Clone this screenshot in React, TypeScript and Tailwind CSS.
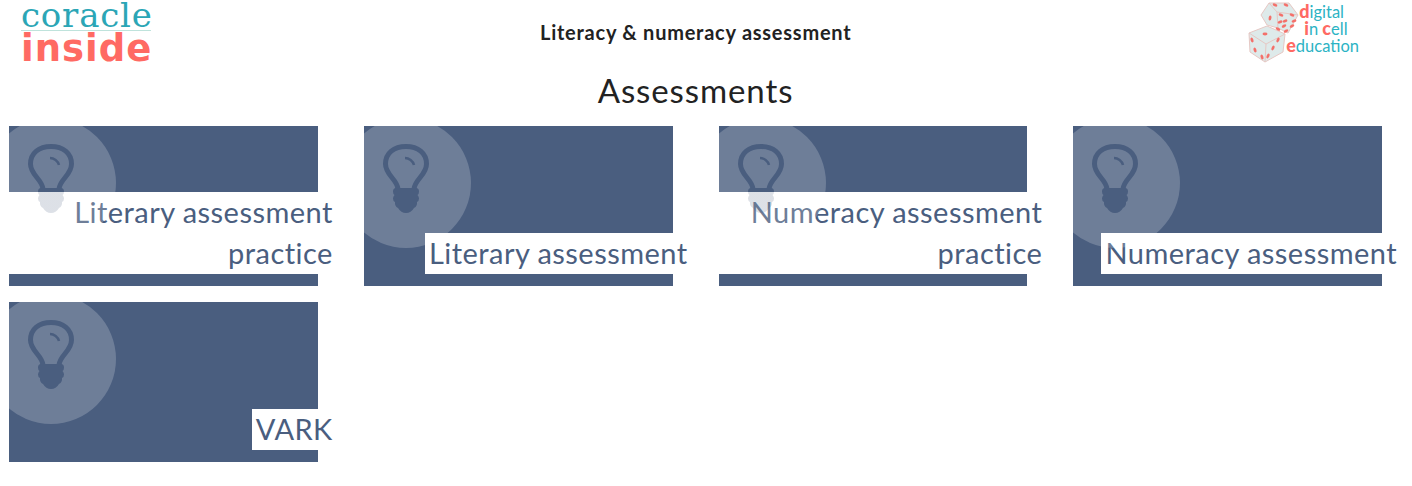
const CARDS = [
  { title: 'Literary assessment practice', wrapped: true },
  { title: 'Literary assessment', wrapped: false },
  { title: 'Numeracy assessment practice', wrapped: true },
  { title: 'Numeracy assessment', wrapped: false },
  { title: 'VARK', wrapped: false },
];

const DARK = '#4a5e7f';

// bulb sits over the white label, where it shows pale instead of dark
const Bulb = ({ id, wrapped }: { id: string; wrapped: boolean }) => {
  const paint = wrapped ? `url(#${id})` : DARK;
  return (
    <svg width="48" height="72" viewBox="0 0 48 72" className="absolute left-[18px] top-[17px] z-30">
      <defs>
        <linearGradient id={id} gradientUnits="userSpaceOnUse" x1="0" y1="0" x2="0" y2="72">
          <stop offset={49 / 72} stopColor={DARK} />
          <stop offset={49 / 72} stopColor={DARK} stopOpacity="0.19" />
        </linearGradient>
      </defs>
      <path
        d="M16 46 C15 36 3.500 32 3.500 21 C3.500 10 12 3.500 24 3.500 C36 3.500 44.500 10 44.500 21 C44.500 32 33 36 32 46"
        fill="none"
        stroke={paint}
        strokeWidth="5"
      />
      <path d="M23 15 C27 15 31 18 32 22" fill="none" stroke={paint} strokeWidth="2.500" />
      <path
        d="M14 45 H34 Q37 45 37 48.500 Q37 51 35.500 52 Q37 53.500 37 55.500 Q37 58 35 59 Q35.500 63 32 65 Q29 70 24 70 Q19 70 16 65 Q12.500 63 13 59 Q11 58 11 55.500 Q11 53.500 12.500 52 Q11 51 11 48.500 Q11 45 14 45 Z"
        fill={paint}
      />
    </svg>
  );
};

const Card = ({ title, wrapped, id }: { title: string; wrapped: boolean; id: string }) => (
  <div className="relative h-40 bg-[#4a5e7f]">
    <div className="absolute bottom-3 right-[-19px] z-10 w-max max-w-[328px] bg-white px-1 text-right text-[29px] leading-[41px] tracking-[0.450px] text-[#4a5e7f]">
      <span className="inline-block -translate-y-px">{title}</span>
    </div>
    <div className="absolute inset-0 z-20 overflow-hidden">
      <div className="absolute left-[-23px] top-[-8px] h-[130px] w-[130px] rounded-full bg-white/20" />
    </div>
    <Bulb id={id} wrapped={wrapped} />
  </div>
);

const Pip = ({ x, y, r = 0 }: { x: number; y: number; r?: number }) => (
  <ellipse cx={x} cy={y} rx="2.500" ry="1.400" transform={`rotate(${r} ${x} ${y})`} />
);

const Dice = () => (
  <svg width="60" height="66" viewBox="0 0 60 66" className="shrink-0">
    <g stroke="#e6c8c4" strokeWidth="1" fill="#deeaea" strokeLinejoin="round">
      <path d="M28 3 L48 3 L57 15 L47 33 L37 28 L26 25 L20 15 Z" />
      <path d="M28 3 L36 12 L57 15 M36 12 L37 28" fill="none" />
      <path d="M8 33 L26 26 L44 34 L42 52 L24 62 L9 52 Z" />
      <path d="M8 33 L25 44 L44 34 M25 44 L24 62" fill="none" />
    </g>
    <g fill="#f4706a">
      <Pip x={34} y={5} r={25} />
      <Pip x={45} y={5} r={25} />
      <Pip x={29} y={18} r={100} />
      <Pip x={40} y={15} r={25} />
      <Pip x={51} y={15} r={25} />
      <Pip x={44} y={21} r={-20} />
      <Pip x={53} y={21} r={-20} />
      <Pip x={39} y={22} r={-20} />
      <Pip x={43} y={26} r={-30} />
      <Pip x={51} y={26} r={-30} />
      <Pip x={45} y={31} r={-30} />
      <Pip x={24} y={34} r={0} />
      <Pip x={37} y={29} r={30} />
      <Pip x={11} y={40} r={70} />
      <Pip x={37} y={40} r={-65} />
      <Pip x={32} y={48} r={-65} />
      <Pip x={14} y={50} r={70} />
      <Pip x={21} y={57} r={70} />
      <Pip x={27} y={56} r={-65} />
    </g>
  </svg>
);

export default function App() {
  return (
    <div className="min-h-[486px] bg-white font-['Lato',sans-serif]">
      <header className="flex h-[65px] items-start">
        <div className="ml-[21px] w-[130px] shrink-0">
          <div className="h-[31px] border-b border-[#bfe3dc] text-center font-['DejaVu_Serif',serif] text-[34px] leading-[30px] tracking-[0.800px] text-[#2ba6b6]">
            coracle
          </div>
          <div className="text-center font-['DejaVu_Sans',sans-serif] text-[37px] font-bold leading-[35px] tracking-[1px] text-[#ff6a63]">
            inside
          </div>
        </div>
        <h1 className="ml-[389px] pt-[20px] text-[20px] font-bold leading-6 tracking-[0.750px] text-[#222]">
          Literacy &amp; numeracy assessment
        </h1>
        <div className="ml-auto mr-[53px] flex items-start">
          <Dice />
          <div className="ml-[-15px] pt-[4px] text-[16.500px] leading-[17px] text-[#2bb3c4]">
            <div className="pl-[13px]"><b className="text-[18px] leading-[0] font-black text-[#ff6a63]">d</b>igital</div>
            <div className="pl-[18px]"><b className="text-[18px] leading-[0] font-black text-[#ff6a63]">i</b>n <b className="text-[18px] leading-[0] font-black text-[#ff6a63]">c</b>ell</div>
            <div><b className="text-[18px] leading-[0] font-black text-[#ff6a63]">e</b>ducation</div>
          </div>
        </div>
      </header>
      <h2 className="mr-[21px] text-center text-[33px] leading-[51px] tracking-[0.900px] text-[#222]">
        Assessments
      </h2>
      <main className="ml-[9px] grid grid-cols-[repeat(4,308.750px)] gap-x-[46px] gap-y-4 pt-[10px]">
        {CARDS.map((c, i) => (
          <Card key={c.title} title={c.title} wrapped={c.wrapped} id={`bulb-${i}`} />
        ))}
      </main>
    </div>
  );
}
